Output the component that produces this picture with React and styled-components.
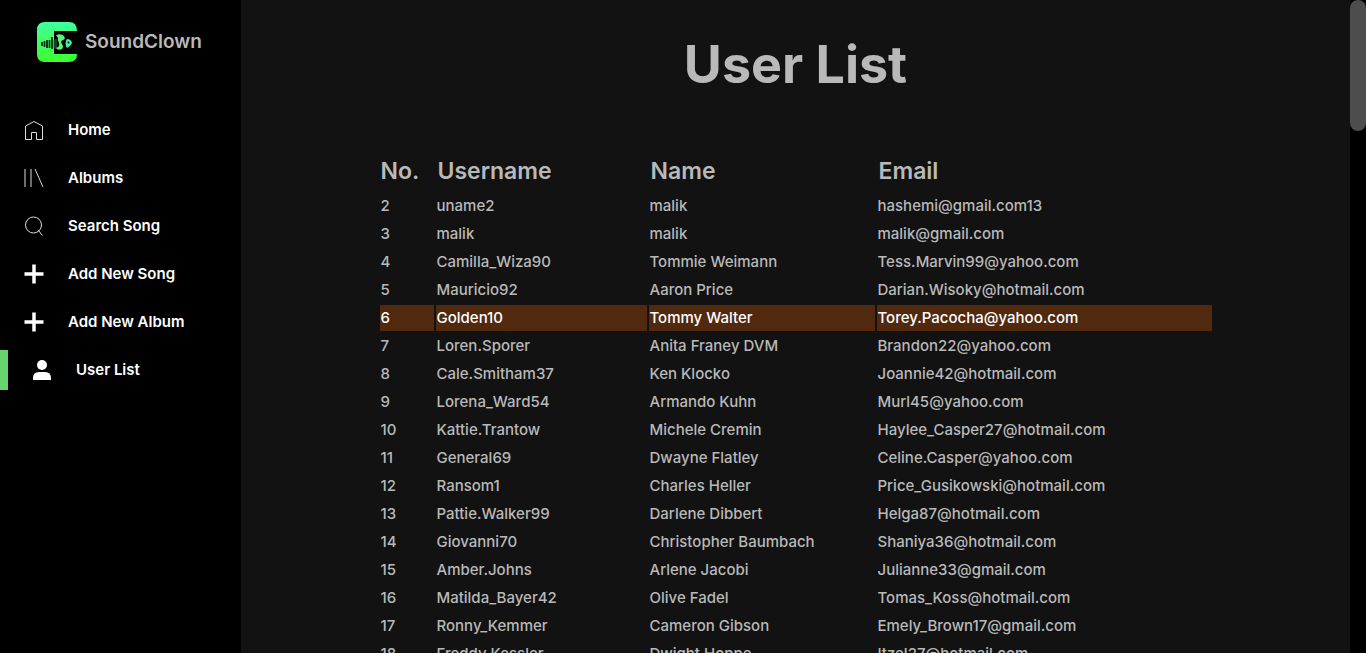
import React from "react";
import styled, { createGlobalStyle } from "styled-components";

const GlobalStyle = createGlobalStyle`
  *, *::before, *::after { box-sizing: border-box; }
  body {
    margin: 0;
    overflow: hidden;
    background: #000;
    color: #b9b9b9;
    font-family: Inter, "Liberation Sans", sans-serif;
    font-size: 15px;
  }
`;

const Layout = styled.div`
  display: flex;
  height: 100vh;
`;

const Sidebar = styled.aside`
  flex: 0 0 241px;
  background: #000;
`;

const Brand = styled.a`
  display: flex;
  align-items: center;
  gap: 8px;
  padding: 22px 0 0 37px;
  color: #b9b9b9;
  font-size: 19px;
  font-weight: 600;
  line-height: 40px;
  text-decoration: none;
`;

const Nav = styled.nav`
  display: flex;
  flex-direction: column;
  gap: 8px;
  margin-top: 48px;
`;

const NavLink = styled.a`
  display: flex;
  align-items: center;
  gap: 24px;
  height: 40px;
  padding-left: 24px;
  border-left: ${({ $active }) => ($active ? "8px solid #65d36e" : "none")};
  color: #fff;
  font-weight: 600;
  text-decoration: none;

  svg { flex: none; }
`;

const NavLabel = styled.span`
  padding-bottom: 2px;
`;

const Content = styled.main`
  flex: 1;
  min-width: 0;
  overflow-y: auto;
  scrollbar-width: none;
  background: #121212;
`;

const Title = styled.h1`
  margin: 0;
  padding: 33px 0 32px;
  font-size: 52px;
  font-weight: 700;
  line-height: 64px;
  text-align: center;
`;

const Users = styled.table`
  width: 836px;
  max-width: 100%;
  margin: 20px auto 0;
  border-spacing: 2px;
  table-layout: fixed;
`;

const Col = styled.col`
  width: ${({ $width }) => $width};
`;

const HeadCell = styled.th`
  height: 40px;
  padding: 0 1px;
  font-size: 23px;
  font-weight: 600;
  line-height: 40px;
  text-align: left;

  & + & { padding-left: 2px; }
`;

const Row = styled.tr`
  background: ${({ $selected }) => ($selected ? "#50290f" : "transparent")};
  color: ${({ $selected }) => ($selected ? "#fff" : "inherit")};
  font-weight: 500;
`;

const Cell = styled.td`
  height: 26px;
  padding: 0 1px;
  line-height: 26px;
  white-space: nowrap;
`;

const ScrollTrack = styled.div`
  flex: 0 0 16px;
  background: #000;
`;

const ScrollThumb = styled.div`
  height: 20%;
  border-radius: 8px;
  background: #4d4d4d;
`;

const Logo = () => (
  <svg width="40" height="40" viewBox="0 0 40 40" aria-hidden="true">
    <defs>
      <linearGradient id="brand" x1="0" y1="0" x2="0" y2="1">
        <stop offset="0" stopColor="#42ffa0" />
        <stop offset="1" stopColor="#3cff2c" />
      </linearGradient>
    </defs>
    <path
      d="M8 0H32Q40 0 40 9H17V32H40Q40 40 32 40H8Q0 40 0 32V8Q0 0 8 0Z"
      fill="url(#brand)"
    />
    <path
      d="M5 20V24M7.500 19V25M10 18V26M12.500 18V26M15 15V27"
      stroke="#042d12"
      strokeWidth="1.800"
    />
    <path d="M17 18V26M19 17V27" stroke="#1f8a3c" strokeWidth="1" />
    <path d="M19 13Q24 11 27 14Q29 17 26 18Q23 19 25 22Q27 25 25 27Q21 29 19 26Q23 25 22 21Q20 18 21 16Z" fill="#5af578" />
    <path d="M30 17Q34 17 35 21Q33 25 30 26Q27 21 30 17Z" fill="#43f5a5" />
    <circle cx="31.500" cy="20.500" r="1" fill="#000" />
  </svg>
);

const HomeIcon = () => (
  <svg width="20" height="20" viewBox="0 0 20 20" fill="none" stroke="#ddd" aria-hidden="true">
    <path d="M1.500 6 10 1.500 18.500 6V19.500H12.500V12.500H7.500V19.500H1.500Z" />
  </svg>
);

const AlbumsIcon = () => (
  <svg width="20" height="20" viewBox="0 0 20 20" fill="none" stroke="#ddd" aria-hidden="true">
    <path d="M1 1V19M7 1V19M11 1 19 19" />
  </svg>
);

const SearchIcon = () => (
  <svg width="20" height="20" viewBox="0 0 20 20" fill="none" stroke="#ddd" aria-hidden="true">
    <circle cx="9.500" cy="9" r="8" />
    <path d="M14.500 14.500 18.500 19.500" />
  </svg>
);

const PlusIcon = () => (
  <svg width="20" height="20" viewBox="0 0 20 20" stroke="#fff" strokeWidth="3.500" aria-hidden="true">
    <path d="M10 .5V19.500M.5 10H19.500" />
  </svg>
);

const UserIcon = () => (
  <svg width="20" height="20" viewBox="0 0 20 20" fill="#fff" aria-hidden="true">
    <circle cx="10" cy="5" r="5" />
    <path d="M1 20V18Q1 12 7 12H13Q19 12 19 18V20Z" />
  </svg>
);

const NAV = [
  { label: "Home", Icon: HomeIcon },
  { label: "Albums", Icon: AlbumsIcon },
  { label: "Search Song", Icon: SearchIcon },
  { label: "Add New Song", Icon: PlusIcon },
  { label: "Add New Album", Icon: PlusIcon },
  { label: "User List", Icon: UserIcon, active: true },
];

const USERS = [
  [2, "uname2", "malik", "hashemi@gmail.com13"],
  [3, "malik", "malik", "malik@gmail.com"],
  [4, "Camilla_Wiza90", "Tommie Weimann", "Tess.Marvin99@yahoo.com"],
  [5, "Mauricio92", "Aaron Price", "Darian.Wisoky@hotmail.com"],
  [6, "Golden10", "Tommy Walter", "Torey.Pacocha@yahoo.com"],
  [7, "Loren.Sporer", "Anita Franey DVM", "Brandon22@yahoo.com"],
  [8, "Cale.Smitham37", "Ken Klocko", "Joannie42@hotmail.com"],
  [9, "Lorena_Ward54", "Armando Kuhn", "Murl45@yahoo.com"],
  [10, "Kattie.Trantow", "Michele Cremin", "Haylee_Casper27@hotmail.com"],
  [11, "General69", "Dwayne Flatley", "Celine.Casper@yahoo.com"],
  [12, "Ransom1", "Charles Heller", "Price_Gusikowski@hotmail.com"],
  [13, "Pattie.Walker99", "Darlene Dibbert", "Helga87@hotmail.com"],
  [14, "Giovanni70", "Christopher Baumbach", "Shaniya36@hotmail.com"],
  [15, "Amber.Johns", "Arlene Jacobi", "Julianne33@gmail.com"],
  [16, "Matilda_Bayer42", "Olive Fadel", "Tomas_Koss@hotmail.com"],
  [17, "Ronny_Kemmer", "Cameron Gibson", "Emely_Brown17@gmail.com"],
  [18, "Freddy.Kessler", "Dwight Hoppe", "Itzel27@hotmail.com"],
];

export default function App() {
  return (
    <>
      <GlobalStyle />
      <Layout>
        <Sidebar>
          <Brand href="#home">
            <Logo />
            SoundClown
          </Brand>
          <Nav>
            {NAV.map(({ label, Icon, active }) => (
              <NavLink key={label} href="#" $active={active}>
                <Icon />
                <NavLabel>{label}</NavLabel>
              </NavLink>
            ))}
          </Nav>
        </Sidebar>
        <Content>
          <Title>User List</Title>
          <Users>
            <colgroup>
              <Col $width="54px" />
              <Col $width="211px" />
              <Col $width="226px" />
              <Col $width="auto" />
            </colgroup>
            <thead>
              <tr>
                <HeadCell>No.</HeadCell>
                <HeadCell>Username</HeadCell>
                <HeadCell>Name</HeadCell>
                <HeadCell>Email</HeadCell>
              </tr>
            </thead>
            <tbody>
              {USERS.map(([id, username, name, email]) => (
                <Row key={id} $selected={id === 6}>
                  <Cell>{id}</Cell>
                  <Cell>{username}</Cell>
                  <Cell>{name}</Cell>
                  <Cell>{email}</Cell>
                </Row>
              ))}
            </tbody>
          </Users>
        </Content>
        <ScrollTrack>
          <ScrollThumb />
        </ScrollTrack>
      </Layout>
    </>
  );
}
